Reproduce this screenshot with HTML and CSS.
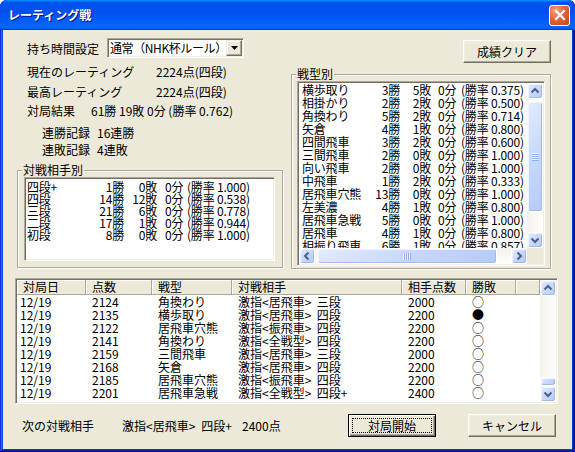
FILE: index.html
```html
<!DOCTYPE html>
<html lang="ja">
<head>
<meta charset="utf-8">
<title>レーティング戦</title>
<link rel="stylesheet" href="styles.css">
</head>
<body>
<div class="window">
  <div class="titlebar">
    <span class="title">レーティング戦</span>
    <span class="close"><svg width="12" height="12" viewBox="0 0 12 12"><path d="M2 2L10 10M10 2L2 10" stroke="#fff" stroke-width="2.2" stroke-linecap="square"/></svg></span>
  </div>
  <div class="client">
    <div class="top">
      <div class="col-left">
        <div class="setting">
          <span class="setting-label">持ち時間設定</span>
          <div class="combo">
            <span class="combo-text">通常（NHK杯ルール）</span>
            <span class="combo-btn"><svg width="7" height="4" viewBox="0 0 7 4"><path d="M0 0H7L3.5 4Z" fill="#000"/></svg></span>
          </div>
        </div>
        <div class="info i1"><span class="key key-long">現在のレーティング</span><span>2224点(四段)</span></div>
        <div class="info i2"><span class="key key-long">最高レーティング</span><span>2224点(四段)</span></div>
        <div class="info i3"><span class="key key-mid">対局結果</span><span>61勝 19敗 0分 (勝率 0.762)</span></div>
        <div class="info sub i4"><span class="key key-sub">連勝記録</span><span>16連勝</span></div>
        <div class="info sub i5"><span class="key key-sub">連敗記録</span><span>4連敗</span></div>
        <div class="group group-opp">
          <span class="group-label">対戦相手別</span>
          <div class="sunken lb-opp">
            <div class="lb-row opp-row"><span>四段+</span><span class="r">1勝</span><span class="r">0敗</span><span class="p">0分</span><span>(勝率 1.000)</span></div>
            <div class="lb-row opp-row"><span>四段</span><span class="r">14勝</span><span class="r">12敗</span><span class="p">0分</span><span>(勝率 0.538)</span></div>
            <div class="lb-row opp-row"><span>三段</span><span class="r">21勝</span><span class="r">6敗</span><span class="p">0分</span><span>(勝率 0.778)</span></div>
            <div class="lb-row opp-row"><span>二段</span><span class="r">17勝</span><span class="r">1敗</span><span class="p">0分</span><span>(勝率 0.944)</span></div>
            <div class="lb-row opp-row"><span>初段</span><span class="r">8勝</span><span class="r">0敗</span><span class="p">0分</span><span>(勝率 1.000)</span></div>
          </div>
        </div>
      </div>
      <div class="col-right">
        <div class="clear-row"><button class="btn btn-clear">成績クリア</button></div>
        <div class="group group-type">
          <span class="group-label">戦型別</span>
          <div class="sunken lb-type">
            <div class="lb-grid">
              <div class="lb-items">
                <div class="lb-row type-row"><span>横歩取り</span><span class="r">3勝</span><span class="r">5敗</span><span class="p">0分</span><span>(勝率 0.375)</span></div>
                <div class="lb-row type-row"><span>相掛かり</span><span class="r">2勝</span><span class="r">2敗</span><span class="p">0分</span><span>(勝率 0.500)</span></div>
                <div class="lb-row type-row"><span>角換わり</span><span class="r">5勝</span><span class="r">2敗</span><span class="p">0分</span><span>(勝率 0.714)</span></div>
                <div class="lb-row type-row"><span>矢倉</span><span class="r">4勝</span><span class="r">1敗</span><span class="p">0分</span><span>(勝率 0.800)</span></div>
                <div class="lb-row type-row"><span>四間飛車</span><span class="r">3勝</span><span class="r">2敗</span><span class="p">0分</span><span>(勝率 0.600)</span></div>
                <div class="lb-row type-row"><span>三間飛車</span><span class="r">2勝</span><span class="r">0敗</span><span class="p">0分</span><span>(勝率 1.000)</span></div>
                <div class="lb-row type-row"><span>向い飛車</span><span class="r">2勝</span><span class="r">0敗</span><span class="p">0分</span><span>(勝率 1.000)</span></div>
                <div class="lb-row type-row"><span>中飛車</span><span class="r">1勝</span><span class="r">2敗</span><span class="p">0分</span><span>(勝率 0.333)</span></div>
                <div class="lb-row type-row"><span>居飛車穴熊</span><span class="r">13勝</span><span class="r">0敗</span><span class="p">0分</span><span>(勝率 1.000)</span></div>
                <div class="lb-row type-row"><span>左美濃</span><span class="r">4勝</span><span class="r">1敗</span><span class="p">0分</span><span>(勝率 0.800)</span></div>
                <div class="lb-row type-row"><span>居飛車急戦</span><span class="r">5勝</span><span class="r">0敗</span><span class="p">0分</span><span>(勝率 1.000)</span></div>
                <div class="lb-row type-row"><span>居飛車</span><span class="r">4勝</span><span class="r">1敗</span><span class="p">0分</span><span>(勝率 0.800)</span></div>
                <div class="lb-row type-row"><span>相振り飛車</span><span class="r">6勝</span><span class="r">1敗</span><span class="p">0分</span><span>(勝率 0.857)</span></div>
              </div>
              <div class="vscroll">
                <span class="sb-btn"><svg width="14" height="14" viewBox="0 0 14 14"><path d="M3.5 8.5L7 5L10.5 8.5" fill="none" stroke="#4D6185" stroke-width="2"/></svg></span>
                <span class="sb-track">
                  <span class="thumb thumb-type"><svg width="7" height="8" viewBox="0 0 7 8"><path d="M0 0.5H7M0 2.5H7M0 4.5H7M0 6.5H7" stroke="#EEF3FE"/><path d="M0 1.5H7M0 3.5H7M0 5.5H7M0 7.5H7" stroke="#8DAFF5"/></svg></span>
                </span>
                <span class="sb-btn"><svg width="14" height="14" viewBox="0 0 14 14"><path d="M3.5 5.5L7 9L10.5 5.5" fill="none" stroke="#4D6185" stroke-width="2"/></svg></span>
              </div>
              <div class="hscroll">
                <span class="sb-btn"><svg width="14" height="14" viewBox="0 0 14 14"><path d="M8.5 3.5L5 7L8.5 10.5" fill="none" stroke="#4D6185" stroke-width="2"/></svg></span>
                <span class="sb-track-h">
                  <span class="thumb thumb-h"><svg width="8" height="7" viewBox="0 0 8 7"><path d="M0.5 0V7M2.5 0V7M4.5 0V7M6.5 0V7" stroke="#EEF3FE"/><path d="M1.5 0V7M3.5 0V7M5.5 0V7M7.5 0V7" stroke="#8DAFF5"/></svg></span>
                </span>
                <span class="sb-btn"><svg width="14" height="14" viewBox="0 0 14 14"><path d="M5.5 3.5L9 7L5.5 10.5" fill="none" stroke="#4D6185" stroke-width="2"/></svg></span>
              </div>
              <div class="corner"></div>
            </div>
          </div>
        </div>
      </div>
    </div>

    <div class="sunken listview">
      <div class="lv-grid">
        <div class="lv-main">
          <div class="lv-head">
            <span class="lv-h">対局日</span><span class="lv-h">点数</span><span class="lv-h">戦型</span><span class="lv-h">対戦相手</span><span class="lv-h">相手点数</span><span class="lv-h">勝敗</span><span class="lv-h"></span>
          </div>
          <div class="lv-row"><span>12/19</span><span>2124</span><span>角換わり</span><span>激指&lt;居飛車&gt;  三段</span><span>2000</span><span>○</span></div>
          <div class="lv-row"><span>12/19</span><span>2135</span><span>横歩取り</span><span>激指&lt;居飛車&gt;  四段</span><span>2200</span><span>●</span></div>
          <div class="lv-row"><span>12/19</span><span>2122</span><span>居飛車穴熊</span><span>激指&lt;振飛車&gt;  四段</span><span>2200</span><span>○</span></div>
          <div class="lv-row"><span>12/19</span><span>2141</span><span>角換わり</span><span>激指&lt;全戦型&gt;  四段</span><span>2200</span><span>○</span></div>
          <div class="lv-row"><span>12/19</span><span>2159</span><span>三間飛車</span><span>激指&lt;居飛車&gt;  三段</span><span>2000</span><span>○</span></div>
          <div class="lv-row"><span>12/19</span><span>2168</span><span>矢倉</span><span>激指&lt;居飛車&gt;  四段</span><span>2200</span><span>○</span></div>
          <div class="lv-row"><span>12/19</span><span>2185</span><span>居飛車穴熊</span><span>激指&lt;振飛車&gt;  四段</span><span>2200</span><span>○</span></div>
          <div class="lv-row"><span>12/19</span><span>2201</span><span>居飛車急戦</span><span>激指&lt;全戦型&gt;  四段+</span><span>2400</span><span>○</span></div>
        </div>
        <div class="vscroll">
          <span class="sb-btn"><svg width="14" height="14" viewBox="0 0 14 14"><path d="M3.5 8.5L7 5L10.5 8.5" fill="none" stroke="#4D6185" stroke-width="2"/></svg></span>
          <span class="sb-track track-end">
            <span class="thumb thumb-lv"></span>
          </span>
          <span class="sb-btn"><svg width="14" height="14" viewBox="0 0 14 14"><path d="M3.5 5.5L7 9L10.5 5.5" fill="none" stroke="#4D6185" stroke-width="2"/></svg></span>
        </div>
      </div>
    </div>

    <div class="bottom">
      <span class="next-label">次の対戦相手</span>
      <span class="next-value">激指&lt;居飛車&gt;<span class="gap1">四段+</span><span class="gap2">2400点</span></span>
      <button class="btn btn-default"><span class="focus">対局開始</span></button>
      <button class="btn btn-cancel">キャンセル</button>
    </div>
  </div>
</div>
</body>
</html>
```

FILE: styles.css
```css
* { box-sizing: border-box; }
html, body { margin: 0; padding: 0; }
body {
  width: 575px;
  height: 452px;
  overflow: hidden;
  background: #ffffff;
  font-family: "Noto Sans CJK JP", "Noto Sans", sans-serif;
  font-size: 12px;
  color: #000;
}

.window {
  width: 575px;
  height: 452px;
  display: flex;
  flex-direction: column;
  padding: 0 3px 3px;
  background: #0855dd;
  border-radius: 7px 7px 0 0;
  box-shadow: inset -1px -1px #00138c, inset 1px 1px #0831d9, inset -2px -2px #001ea0, inset 2px 2px #166aee, inset -3px -3px #003bda, inset 3px 3px #0855dd;
  overflow: hidden;
}

.titlebar {
  flex: none;
  height: 30px;
  margin: 0 -3px;
  display: flex;
  align-items: center;
  padding: 0 5px 0 8px;
  border-radius: 7px 7px 0 0;
  background: linear-gradient(180deg, #0997ff, #0053ee 8%, #0050ee 40%, #0066ff 88%, #0066ff 93%, #005bff 95%, #003dd7 96%, #003dd7);
}
.title {
  flex: 1;
  color: #fff;
  font-weight: bold;
  font-size: 12px;
  line-height: 16px;
  text-shadow: 1px 1px #0f1089;
}
.close {
  width: 21px;
  height: 21px;
  border: 1px solid #fff;
  border-radius: 3px;
  display: flex;
  align-items: center;
  justify-content: center;
  background: radial-gradient(circle at 30% 25%, #f4a488 0%, #e2633b 45%, #c8431b 100%);
}

.client {
  flex: 1;
  display: flex;
  flex-direction: column;
  background: #ece9d8;
}

.top {
  display: flex;
  align-items: flex-start;
  height: 239px;
  flex: none;
}
.col-left {
  margin-left: 14px;
  width: 266px;
  display: flex;
  flex-direction: column;
}
.col-right {
  margin-left: 8px;
  width: 260px;
  display: flex;
  flex-direction: column;
}

.setting {
  margin-top: 8px;
  height: 20px;
  display: flex;
  align-items: center;
  padding-left: 10px;
}
.setting-label { width: 80px; white-space: nowrap; }
.combo {
  width: 137px;
  height: 20px;
  display: flex;
  align-items: center;
  padding: 1px;
  background: #fff;
  border: 1px solid;
  border-color: #aca899 #fff #fff #aca899;
  box-shadow: inset 1px 1px #716f64, inset -1px -1px #f1efe2;
}
.combo-text {
  flex: 1;
  padding-left: 1px;
  white-space: nowrap;
  overflow: hidden;
  letter-spacing: -0.4px;
  line-height: 16px;
}
.combo-btn {
  width: 16px;
  height: 16px;
  display: flex;
  align-items: center;
  justify-content: center;
  background: #ece9d8;
  border: 1px solid;
  border-color: #f1efe2 #716f64 #716f64 #f1efe2;
  box-shadow: inset -1px -1px #aca899, inset 1px 1px #fff;
}

.info {
  height: 16px;
  line-height: 16px;
  display: flex;
  padding-left: 10px;
  white-space: nowrap;
}
.info.sub { padding-left: 25px; }
.i1 { margin-top: 6px; }
.i2 { margin-top: 4px; }
.i3 { margin-top: 3px; }
.i4 { margin-top: 6px; }
.i5 { margin-top: 1px; }
.key-long { width: 129px; }
.key-mid { width: 64px; }
.key-sub { width: 55px; }

.group {
  position: relative;
  border: 1px solid #aca899;
  box-shadow: inset 1px 1px #fff, 1px 1px #fff;
}
.group-label {
  position: absolute;
  top: -8px;
  left: 4px;
  padding: 0 1px;
  line-height: 14px;
  background: #ece9d8;
  white-space: nowrap;
}
.group-opp {
  margin-top: 12px;
  width: 266px;
  height: 98px;
  padding: 6px 7px 6px 6px;
}
.group-type {
  margin-top: 11px;
  width: 260px;
  height: 195px;
  padding: 6px 5px 2px 5px;
}

.sunken {
  background: #fff;
  border: 1px solid;
  border-color: #aca899 #fff #fff #aca899;
  padding: 1px;
  box-shadow: inset 1px 1px #716f64, inset -1px -1px #f1efe2;
}

.lb-opp {
  width: 251px;
  height: 84px;
  padding-top: 3px;
  overflow: hidden;
}
.lb-row {
  display: grid;
  white-space: nowrap;
  letter-spacing: -0.2px;
}
.lb-row .r { text-align: right; }
.opp-row {
  height: 12px;
  line-height: 12px;
  padding-left: 1px;
  grid-template-columns: 60px 37px 33px 30px auto;
}
.opp-row .p { padding-left: 8px; }

.lb-type {
  width: 248px;
  height: 185px;
}
.lb-grid {
  display: grid;
  grid-template-columns: 228px 16px;
  grid-template-rows: 165px 16px;
  width: 244px;
  height: 181px;
}
.lb-items {
  overflow: hidden;
  margin-top: -2px;
  padding-top: 2px;
}
.type-row {
  height: 13px;
  line-height: 13px;
  padding-left: 3px;
  grid-template-columns: 60px 38px 31px 30px auto;
}
.type-row .p { padding-left: 7px; }

.vscroll {
  display: flex;
  flex-direction: column;
  background: linear-gradient(to right, #f3f1ec, #fefefb);
}
.hscroll {
  display: flex;
  background: linear-gradient(to bottom, #f3f1ec, #fefefb);
}
.corner { background: #ece9d8; }

.sb-btn, .thumb {
  border: 1px solid #fff;
  border-radius: 3px;
  background: linear-gradient(135deg, #e2eafe 0%, #c6d6fc 55%, #b6caf8 100%);
  box-shadow: inset -1px -1px #a3baef, inset 1px 1px #eef3fe;
  display: flex;
  align-items: center;
  justify-content: center;
}
.sb-btn {
  flex: none;
  width: 16px;
  height: 16px;
}
.sb-track {
  flex: 1;
  display: flex;
  flex-direction: column;
}
.track-end { justify-content: flex-end; }
.sb-track-h {
  flex: 1;
  display: flex;
  padding-left: 2px;
}
.thumb-type {
  margin-top: 2px;
  height: 111px;
}
.thumb-h { width: 180px; }
.thumb-lv { height: 9px; }

.listview {
  flex: none;
  margin: 9px 0 0 12px;
  width: 543px;
  height: 126px;
}
.lv-grid {
  display: grid;
  grid-template-columns: 523px 16px;
  height: 122px;
}
.lv-main { overflow: hidden; }
.lv-head {
  display: grid;
  grid-template-columns: 69px 66px 80px 170px 64px 50px 24px;
  height: 15px;
}
.lv-h {
  background: #ece9d8;
  border-right: 1px solid #aca899;
  border-bottom: 1px solid #aca899;
  box-shadow: inset 1px 1px #fff;
  padding-left: 6px;
  line-height: 14px;
  white-space: nowrap;
}
.lv-row {
  display: grid;
  grid-template-columns: 69px 66px 80px 170px 64px 50px;
  height: 13px;
  line-height: 13px;
  white-space: pre;
}
.lv-row span { padding-left: 6px; }
.lv-row span:first-child { padding-left: 3px; }

.bottom {
  flex: none;
  margin-top: 10px;
  height: 23px;
  display: flex;
  align-items: center;
  padding: 0 16px 0 19px;
}
.next-label { width: 100px; white-space: nowrap; }
.next-value { flex: 1; white-space: nowrap; }
.gap1 { margin-left: 6px; }
.gap2 { margin-left: 10px; }

.btn {
  font: inherit;
  color: #000;
  padding: 0;
  margin: 0;
  width: 88px;
  height: 23px;
  background: #ece9d8;
  border: 1px solid;
  border-color: #fff #716f64 #716f64 #fff;
  box-shadow: inset -1px -1px #aca899, inset 1px 1px #f1efe2;
  display: flex;
  align-items: center;
  justify-content: center;
  line-height: 14px;
}
.clear-row {
  margin-top: 10px;
  height: 23px;
  display: flex;
  justify-content: flex-end;
}
.btn-default {
  border-color: #000;
  box-shadow: inset 1px 1px #fff, inset -1px -1px #716f64, inset -2px -2px #aca899;
  align-items: stretch;
}
.focus {
  flex: 1;
  margin: 3px;
  border: 1px dotted #000;
  display: flex;
  align-items: center;
  justify-content: center;
}
.btn-cancel { margin-left: 32px; }
```
